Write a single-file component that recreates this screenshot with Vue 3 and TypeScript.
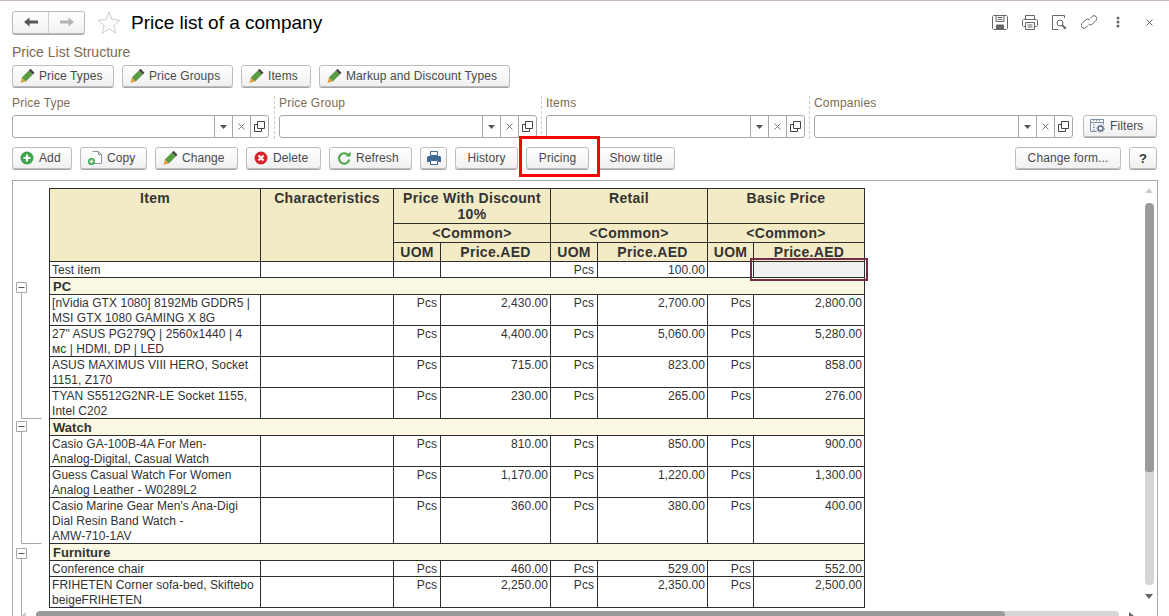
<script setup lang="ts">
interface Row {
  kind: 'item' | 'group'
  name: string
  p1?: string
  p2?: string
  p3?: string
  tall?: string
}
const rows: Row[] = [
  { kind: 'item', name: 'Test item', p2: '100.00', tall: 'one', },
  { kind: 'group', name: 'PC' },
  { kind: 'item', name: '[nVidia GTX 1080] 8192Mb GDDR5 |\nMSI GTX 1080 GAMING X 8G', p1: '2,430.00', p2: '2,700.00', p3: '2,800.00', tall: 'two' },
  { kind: 'item', name: '27" ASUS PG279Q | 2560x1440 | 4\nмс | HDMI, DP | LED', p1: '4,400.00', p2: '5,060.00', p3: '5,280.00', tall: 'two' },
  { kind: 'item', name: 'ASUS MAXIMUS VIII HERO, Socket\n1151, Z170', p1: '715.00', p2: '823.00', p3: '858.00', tall: 'two' },
  { kind: 'item', name: 'TYAN S5512G2NR-LE Socket 1155,\nIntel C202', p1: '230.00', p2: '265.00', p3: '276.00', tall: 'two' },
  { kind: 'group', name: 'Watch' },
  { kind: 'item', name: 'Casio GA-100B-4A For Men-\nAnalog-Digital, Casual Watch', p1: '810.00', p2: '850.00', p3: '900.00', tall: 'two' },
  { kind: 'item', name: 'Guess Casual Watch For Women\nAnalog Leather - W0289L2', p1: '1,170.00', p2: '1,220.00', p3: '1,300.00', tall: 'two' },
  { kind: 'item', name: "Casio Marine Gear Men's Ana-Digi\nDial Resin Band Watch -\nAMW-710-1AV", p1: '360.00', p2: '380.00', p3: '400.00', tall: 'three' },
  { kind: 'group', name: 'Furniture' },
  { kind: 'item', name: 'Conference chair', p1: '460.00', p2: '529.00', p3: '552.00', tall: 'one' },
  { kind: 'item', name: 'FRIHETEN Corner sofa-bed, Skiftebo\nbeigeFRIHETEN', p1: '2,250.00', p2: '2,350.00', p3: '2,500.00', tall: 'two' },
]
const structure = [
  { label: 'Price Types', cls: 's-types' },
  { label: 'Price Groups', cls: 's-groups' },
  { label: 'Items', cls: 's-items' },
  { label: 'Markup and Discount Types', cls: 's-markup' },
]
const filters = ['Price Type', 'Price Group', 'Items', 'Companies']
const groupsHead = ['Price With Discount\n10%', 'Retail', 'Basic Price']
</script>

<template>
  <div class="page">
    <header class="top">
      <div class="nav">
        <span class="nav-cell">
          <svg width="14" height="10" viewBox="0 0 14 10"><path d="M0 5l5.500-4.500v3H14v3H5.500v3z" fill="#555"/></svg>
        </span>
        <span class="nav-cell">
          <svg width="14" height="10" viewBox="0 0 14 10"><path d="M14 5L8.500.5v3H0v3h8.500v3z" fill="#b4b4b4"/></svg>
        </span>
      </div>
      <svg class="star" width="24" height="23" viewBox="0 0 24 23"><path d="M12 1l3 7.600 8 .6-6.200 5.100 2 7.900L12 17.900 5.200 22.300l2-7.900L1 9.200l8-.6z" fill="#fff" stroke="#c9cdd0" stroke-width="1"/></svg>
      <h1 class="title">Price list of a company</h1>
      <div class="actions">
        <svg width="16" height="15" viewBox="0 0 16 15" fill="none" stroke="#666"><path d="M1.500.5h13l1 1v12l-1 1h-13l-1-1v-12z"/><path d="M4 .5v6h8v-6M5.500 2.500h5M5.500 4.500h5"/><path d="M4.500 10h7v4.500h-7z" fill="#666"/></svg>
        <svg width="16" height="15" viewBox="0 0 16 15" fill="none" stroke="#666"><path d="M3.500 4.500v-4h9v4M3.500 11.500h-2l-1-1v-5l1-1h13l1 1v5l-1 1h-2"/><path d="M3.500 7.500h9v7h-9zM5.500 10h5M5.500 12h5"/></svg>
        <svg width="15" height="15" viewBox="0 0 15 15" fill="none" stroke="#666"><path d="M12.500 3V.5H.5v14h6"/><circle cx="8" cy="8" r="3"/><path d="M10.300 10.300l3.500 3.500" stroke-width="2"/></svg>
        <svg width="16" height="16" viewBox="0 0 16 16" fill="none" stroke="#666"><path d="M9 4.500L11 2.500a2.800 2.800 0 0 1 4 4L11.500 10a2.800 2.800 0 0 1-4 0"/><path d="M7 11.500L5 13.500a2.800 2.800 0 0 1-4-4L4.500 6a2.800 2.800 0 0 1 4 0"/></svg>
        <svg class="dots" width="4" height="12" viewBox="0 0 4 12" fill="#666"><circle cx="2" cy="2" r="1.500"/><circle cx="2" cy="6" r="1.500"/><circle cx="2" cy="10" r="1.500"/></svg>
        <svg class="close" width="7" height="7" viewBox="0 0 7 7" stroke="#666" fill="none"><path d="M.5.500l6 6M6.500.500l-6 6"/></svg>
      </div>
    </header>

    <div class="caption">Price List Structure</div>
    <div class="btn-row structure">
      <button v-for="s in structure" :key="s.label" class="btn has-icon" :class="s.cls" type="button">
        <svg class="ico" width="16" height="16" viewBox="0 0 16 16"><path d="M1.500 15l1.300-5.500 4 4z" fill="#e4a23e"/><path d="M2.800 9.500L9.800 2.500l4 4-7 7z" fill="#5a9c42"/><path d="M9.800 2.500l1.700-1.700 4 4-1.700 1.700z" fill="#444"/></svg>
        {{ s.label }}
      </button>
    </div>

    <div class="filters">
      <template v-for="(f, i) in filters" :key="f">
        <span v-if="i > 0" class="sep"></span>
        <div class="filter" :class="'f' + i">
          <label class="flabel">{{ f }}</label>
          <div class="field">
            <span class="field-input"></span>
            <span class="field-btn"><svg width="7" height="4" viewBox="0 0 7 4"><path d="M0 0h7L3.500 4z" fill="#555"/></svg></span>
            <span class="field-btn"><svg width="7" height="7" viewBox="0 0 7 7" fill="none" stroke="#777"><path d="M.5.500l6 6M6.500.500l-6 6"/></svg></span>
            <span class="field-btn"><svg width="11" height="11" viewBox="0 0 11 11" fill="none" stroke="#444"><path d="M3.500 .5h7v7h-7z"/><path d="M3.500 3.500h-3v7h7v-3"/></svg></span>
          </div>
        </div>
      </template>
      <button class="btn has-icon filters-btn" type="button">
        <svg class="ico" width="15" height="14" viewBox="0 0 15 14" fill="none" stroke="#7f8ea8"><path d="M.5.500h13v3H.5zM.5 3.500v9h6M13.500 3.500v2"/><path d="M3 6h2M3 8.500h2M3 11h2M3 1.500h1M6 1.500h1M9 1.500h1"/><circle cx="10.500" cy="9.500" r="2.500" stroke="#5c6c88" stroke-width="1.500"/><circle cx="10.500" cy="9.500" r="4" stroke="#9aa6bb" stroke-dasharray="1.500 1.500"/></svg>
        Filters
      </button>
    </div>

    <div class="btn-row toolbar">
      <button class="btn has-icon t-add" type="button">
        <svg class="ico" width="16" height="16" viewBox="0 0 16 16"><circle cx="8" cy="8" r="6.500" fill="#3ea34a"/><path d="M8 4.500v7M4.500 8h7" stroke="#fff" stroke-width="2.200"/></svg>
        Add
      </button>
      <button class="btn has-icon t-copy" type="button">
        <svg class="ico" width="16" height="16" viewBox="0 0 16 16"><path d="M5.500 1.500h6l3 3v9h-8" fill="#fff" stroke="#8b95a3"/><path d="M11.500 1.500v3h3" fill="none" stroke="#8b95a3"/><circle cx="4.500" cy="11.500" r="3.500" fill="#3ea34a"/><path d="M4.500 9.500v4M2.500 11.500h4" stroke="#fff" stroke-width="1.300"/></svg>
        Copy
      </button>
      <button class="btn has-icon t-change" type="button">
        <svg class="ico" width="16" height="16" viewBox="0 0 16 16"><path d="M1.500 15l1.300-5.500 4 4z" fill="#e4a23e"/><path d="M2.800 9.500L9.800 2.500l4 4-7 7z" fill="#5a9c42"/><path d="M9.800 2.500l1.700-1.700 4 4-1.700 1.700z" fill="#444"/></svg>
        Change
      </button>
      <button class="btn has-icon t-delete" type="button">
        <svg class="ico" width="16" height="16" viewBox="0 0 16 16"><circle cx="8" cy="8" r="6.500" fill="#d9232e"/><path d="M5.500 5.500l5 5M10.500 5.500l-5 5" stroke="#fff" stroke-width="2"/></svg>
        Delete
      </button>
      <button class="btn has-icon t-refresh" type="button">
        <svg class="ico" width="16" height="16" viewBox="0 0 16 16" fill="none"><path d="M12.500 5.500A5.200 5.200 0 1 0 13.300 9.500" stroke="#47a644" stroke-width="2"/><path d="M9.500 6.500h5v-5z" fill="#47a644"/></svg>
        Refresh
      </button>
      <button class="btn print" type="button">
        <svg width="14" height="14" viewBox="0 0 14 14"><path d="M3.500 .5h7v4h-7z" fill="#fff" stroke="#3f6a94"/><path d="M1 5h12l1 1v5h-3V9H3v2H0V6z" fill="#3f6a94"/><path d="M3.500 9.500h7v4h-7z" fill="#fff" stroke="#3f6a94"/></svg>
      </button>
      <button class="btn t-plain t-history" type="button">History</button>
      <div class="marked">
        <button class="btn t-plain t-pricing" type="button">Pricing</button>
        <span class="red-box"></span>
      </div>
      <button class="btn t-plain t-show" type="button">Show title</button>
      <span class="spacer"></span>
      <button class="btn t-plain t-form" type="button">Change form...</button>
      <button class="btn help" type="button">?</button>
    </div>

    <section class="panel">
      <svg class="tree" width="29" height="435" viewBox="13 181 29 435" fill="none" stroke="#a8a8a8">
        <path d="M21.500 292v126.500H41.500M21.500 432v111.500H41.500M21.500 558V616"/>
        <g fill="#fff">
          <path d="M16.500 282.500h10v10h-10zM16.500 421.500h10v10h-10zM16.500 548.500h10v10h-10z"/>
        </g>
        <path d="M18.500 287.500h6M18.500 426.500h6M18.500 553.500h6" stroke="#555"/>
      </svg>
      <div class="scroll">
        <table class="grid">
          <colgroup>
            <col class="c-item"><col class="c-char">
            <col class="c-uom"><col class="c-price">
            <col class="c-uom"><col class="c-price">
            <col class="c-uom2"><col class="c-price2">
          </colgroup>
          <thead>
            <tr class="h1">
              <th rowspan="3">Item</th>
              <th rowspan="3">Characteristics</th>
              <th v-for="g in groupsHead" :key="g" colspan="2" class="multi">{{ g }}</th>
            </tr>
            <tr class="h2">
              <th v-for="g in groupsHead" :key="g" colspan="2">&lt;Common&gt;</th>
            </tr>
            <tr class="h3">
              <template v-for="g in groupsHead" :key="g">
                <th>UOM</th>
                <th>Price.AED</th>
              </template>
            </tr>
          </thead>
          <tbody>
            <template v-for="(r, i) in rows" :key="r.name">
              <tr v-if="r.kind === 'group'" class="group">
                <td colspan="8"><div class="cell">{{ r.name }}</div></td>
              </tr>
              <tr v-else :class="r.tall">
                <td class="name"><div class="cell">{{ r.name }}</div></td>
                <td></td>
                <td class="num uom"><div class="cell">{{ r.p1 ? 'Pcs' : '' }}</div></td>
                <td class="num"><div class="cell">{{ r.p1 }}</div></td>
                <td class="num uom"><div class="cell">Pcs</div></td>
                <td class="num"><div class="cell">{{ r.p2 }}</div></td>
                <td class="num"><div class="cell">{{ r.p3 ? 'Pcs' : '' }}</div></td>
                <td class="num" :class="{ selected: i === 0 }">
                  <div class="cell">{{ r.p3 }}</div><span v-if="i === 0" class="sel-frame"></span>
                </td>
              </tr>
            </template>
          </tbody>
        </table>
      </div>
      <div class="vbar">
        <span class="arrow up"></span>
        <span class="vtrack"><span class="vthumb"></span></span>
        <span class="arrow down"></span>
      </div>
      <div class="hbar">
        <span class="arrow left"></span>
        <span class="htrack"><span class="hthumb"></span></span>
        <span class="arrow right"></span>
      </div>
    </section>
  </div>
</template>

<style>
html, body { margin: 0; background: #fff; }
</style>

<style scoped>
.page {
  width: 1169px;
  height: 616px;
  box-sizing: border-box;
  border-top: 1px solid #c6b3bb;
  overflow: hidden;
  display: flex;
  flex-direction: column;
  background: #fff;
  font-family: "Liberation Sans", Arial, sans-serif;
  font-size: 12px;
  color: #4a4a4a;
}
.top {
  display: flex;
  align-items: center;
  height: 24px;
  margin-top: 9px;
  padding-left: 12px;
  flex: none;
}
.nav {
  display: flex;
  width: 73px;
  height: 23px;
  box-sizing: border-box;
  border: 1px solid #b9b9b9;
  border-radius: 3px;
  background: linear-gradient(#fff, #f1f1f1);
  box-shadow: 0 1px 0 #aaa;
}
.nav-cell {
  flex: 1;
  display: flex;
  align-items: center;
  justify-content: center;
}
.nav-cell + .nav-cell { border-left: 1px solid #d0d0d0; }
.star { margin-left: 12px; flex: none; }
.title {
  margin: 0 0 0 10px;
  padding-top: 1px;
  font-size: 19px;
  font-weight: 400;
  color: #000;
  line-height: 24px;
}
.actions {
  margin-left: auto;
  display: flex;
  align-items: center;
  gap: 14px;
  padding-right: 16px;
}
.dots { margin: 0 12px 0 5px; }
.caption {
  margin-top: 10px;
  height: 16px;
  line-height: 16px;
  padding-left: 12px;
  font-size: 14px;
  color: #7d6c4f;
  flex: none;
}
.btn-row {
  display: flex;
  gap: 8px;
  flex: none;
  padding-left: 12px;
}
.structure { margin-top: 5px; height: 23px; }
.btn {
  height: 22px;
  box-sizing: border-box;
  border: 1px solid #bdbdbd;
  border-radius: 3px;
  background: linear-gradient(#fff, #f0f0f0);
  box-shadow: 0 1px 0 #a6a6a6;
  padding: 0;
  font: inherit;
  color: #4a4a4a;
  letter-spacing: .1px;
  display: inline-flex;
  align-items: center;
  white-space: nowrap;
}
.has-icon { padding-left: 6px; }
.t-plain { justify-content: center; }
.s-types { width: 102px; }
.s-groups { width: 111px; }
.s-items { width: 70px; }
.s-markup { width: 191px; }
.t-add { width: 60px; }
.t-copy { width: 67px; }
.t-change { width: 83px; }
.t-delete { width: 75px; }
.t-refresh { width: 83px; }
.t-history { width: 63px; }
.t-pricing { width: 63px; }
.t-show { width: 78px; }
.t-form { width: 106px; }
.ico { margin-right: 4px; flex: none; }
.filters {
  display: flex;
  align-items: flex-start;
  margin-top: 8px;
  padding-left: 12px;
  height: 43px;
  flex: none;
}
.sep {
  width: 0;
  height: 43px;
  border-left: 1px dashed #ccc;
  margin: 0 4px 0 4px;
}
.f0 { width: 257px; margin-right: 1px; }
.f1 { width: 258px; }
.f2 { width: 259px; }
.f3 { width: 259px; }
.flabel {
  display: block;
  height: 19px;
  line-height: 15px;
  color: #7d6c4f;
  letter-spacing: .2px;
}
.field {
  display: flex;
  height: 23px;
  box-sizing: border-box;
  border: 1px solid #a8a8a8;
  border-radius: 3px;
  background: #fff;
}
.field-input { flex: 1; }
.field-btn {
  width: 18px;
  box-sizing: border-box;
  border-left: 1px solid #a8a8a8;
  display: flex;
  align-items: center;
  justify-content: center;
}
.filters-btn {
  margin: 19px 0 0 10px;
  width: 74px;
}
.filters-btn .ico { margin-right: 5px; }
.toolbar {
  margin-top: 8px;
  height: 23px;
  padding-right: 12px;
}
.print { width: 27px; justify-content: center; }
.marked { position: relative; height: 23px; }
.red-box {
  position: absolute;
  left: -7px;
  top: -11px;
  width: 81px;
  height: 41px;
  box-sizing: border-box;
  border: 3px solid #f00;
  z-index: 2;
}
.spacer { flex: 1; }
.help { width: 28px; justify-content: center; font-weight: 700; color: #333; font-size: 13px; }
.panel {
  position: relative;
  margin: 10px 0 0 12px;
  width: 1146px;
  flex: 1;
  min-height: 0;
  box-sizing: border-box;
  border: 1px solid #aaa;
  border-bottom: 0;
  display: flex;
  overflow: hidden;
}
.tree {
  flex: none;
  display: block;
}
.scroll {
  flex: 1;
  padding: 7px 0 0 7px;
  overflow: hidden;
}
.grid {
  border-collapse: collapse;
  table-layout: fixed;
  width: 816px;
  color: #333;
}
.c-item { width: 211px; }
.c-char { width: 133px; }
.c-uom { width: 47px; }
.c-price { width: 110px; }
.c-uom2 { width: 46px; }
.c-price2 { width: 111px; }
th, td {
  border: 1px solid #2d2d2d;
  padding: 0;
  overflow: visible;
}
th {
  background: #f3ebc5;
  font-size: 14px;
  font-weight: 700;
  line-height: 16px;
  text-align: center;
  vertical-align: top;
  padding-top: 1px;
  letter-spacing: .3px;
}
.multi { white-space: pre-line; }
.h1 { height: 35px; }
.h2 { height: 19px; }
.h3 { height: 19px; }
td {
  font-size: 12px;
  line-height: 15px;
  vertical-align: top;
  white-space: pre-line;
  letter-spacing: .05px;
}
.cell { padding-top: 1px; margin-bottom: -1px; }
.name { padding-left: 2px; }
.num { text-align: right; padding-right: 2px; }
.uom { padding-right: 3px; }
.one { height: 16px; }
.two { height: 31px; }
.three { height: 46px; }
.group { height: 17px; }
.group td {
  background: #faf7e3;
  font-size: 13px;
  font-weight: 700;
  padding-left: 3px;
  line-height: 16px;
}
.selected {
  position: relative;
  background: #f0f0f0;
}
.sel-frame {
  position: absolute;
  left: -4px;
  top: -4px;
  right: -4px;
  bottom: -4px;
  border: 2px solid #772b46;
  z-index: 1;
}
.vbar {
  position: absolute;
  right: 3px;
  top: 0;
  bottom: 0;
  width: 9px;
  display: flex;
  flex-direction: column;
  align-items: center;
}
.vtrack {
  position: absolute;
  top: 22px;
  left: 0;
  width: 9px;
  height: 382px;
  border-radius: 4px;
  background: #d6d6d6;
  overflow: hidden;
}
.vthumb {
  display: block;
  height: 269px;
  border-radius: 4px 4px 3px 3px;
  background: #9b9b9b;
}
.hbar {
  position: absolute;
  left: 0;
  right: 0;
  bottom: 0;
  height: 5px;
}
.htrack {
  position: absolute;
  left: 23px;
  top: 0;
  width: 1083px;
  height: 9px;
  border-radius: 4px;
  background: #d6d6d6;
  overflow: hidden;
}
.hthumb {
  display: block;
  width: 969px;
  height: 9px;
  border-radius: 4px;
  background: #9b9b9b;
}
.arrow { position: absolute; width: 0; height: 0; }
.up {
  top: 7px;
  left: 0;
  border-left: 4px solid transparent;
  border-right: 4px solid transparent;
  border-bottom: 5px solid #ccc;
}
.down {
  top: 413px;
  left: 0;
  border-left: 4px solid transparent;
  border-right: 4px solid transparent;
  border-top: 5px solid #666;
}
.left {
  left: 8px;
  top: 1px;
  border-top: 4px solid transparent;
  border-bottom: 4px solid transparent;
  border-right: 5px solid #ccc;
}
.right {
  left: 1116px;
  top: 1px;
  border-top: 4px solid transparent;
  border-bottom: 4px solid transparent;
  border-left: 5px solid #666;
}
</style>
